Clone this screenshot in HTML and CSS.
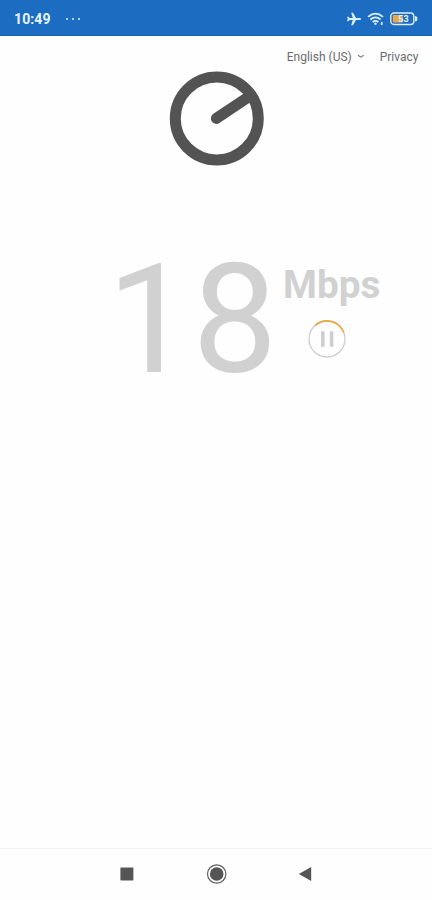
FILE: index.html
```html
<!DOCTYPE html>
<html lang="en">
<head>
<meta charset="utf-8">
<title>Speed test</title>
<link rel="stylesheet" href="styles.css">
</head>
<body>
<header class="status">
  <span class="time">10:49</span>
  <span class="dots"><i></i><i></i><i></i></span>
  <svg class="plane" width="16" height="16" viewBox="0 0 16 16"><path d="M15 8c0-.7-.6-1.1-1.3-1.1H10L7 1.8H5.2l1.6 5.1H3.6L2.5 5.8H1.1L1.8 8l-.7 2.2h1.4l1.1-1.1h3.2l-1.6 5.1H7L10 9.1h3.7C14.4 9.1 15 8.7 15 8z"/></svg>
  <svg class="wifi" width="18" height="14" viewBox="0 0 18 14"><path d="M1 4.8Q8.5-1.4 16 4.8M3.4 7.5Q8.5 3.4 13.6 7.5M5.7 10Q8.5 7.7 11.3 10"/><circle cx="8.5" cy="11.7" r="1.2"/><path d="M14.7 10v3"/></svg>
  <svg class="battery" width="28" height="14" viewBox="0 0 28 14"><rect class="case" x=".8" y="1" width="23" height="11.5" rx="3.2"/><path class="tip" d="M25 4q2.4 0 2.4 2.7T25 9.5z"/><rect class="charge" x="2.8" y="3" width="10" height="7.5" rx="1"/><text x="8.3" y="10.1">53</text></svg>
</header>
<main>
  <nav class="links">
    <span>English (US)</span>
    <svg width="8" height="5" viewBox="0 0 8 5"><path d="M1 1.2l2.8 1.9L6.6 1.2"/></svg>
    <span class="privacy">Privacy</span>
  </nav>
  <svg class="logo" width="96" height="96" viewBox="0 0 96 96"><circle cx="47.8" cy="48.4" r="41.5"/><path d="M47.4 48.4L82 25.2"/></svg>
  <section class="result">
    <div class="value">18</div>
    <div class="side">
      <div class="unit">Mbps</div>
      <svg class="pause" width="40" height="40" viewBox="0 0 40 40"><circle cx="20" cy="20" r="18"/><path class="arc" d="M8.2 6.4A18 18 0 0 1 36.8 13.5"/><path class="bars" d="M15.8 12.2v15.6M24.6 12.2v15.6"/></svg>
    </div>
  </section>
</main>
<footer class="navbar">
  <svg width="20" height="24" viewBox="0 0 20 24"><rect x="3.4" y="5.4" width="13" height="13" rx=".6"/></svg>
  <svg width="24" height="24" viewBox="0 0 24 24"><circle class="ring" cx="12.7" cy="12" r="9.2"/><circle cx="12.7" cy="12" r="6.8"/></svg>
  <svg width="20" height="24" viewBox="0 0 20 24"><path d="M3.8 12L16.2 5v14z"/></svg>
</footer>
</body>
</html>
```
FILE: styles.css
```css
* { box-sizing: border-box; }
body {
  margin: 0;
  height: 900px;
  display: flex;
  flex-direction: column;
  overflow: hidden;
  background: #fefefe;
  font-family: Roboto, sans-serif;
}
svg { display: block; flex: none; }
.status {
  height: 36px;
  flex: none;
  display: flex;
  align-items: center;
  padding: 3px 14px 0;
  background: #1c6dc1;
  border-bottom: 1px solid #1765b8;
  color: #e9f4ff;
}
.time { width: 51px; font-size: 14px; font-weight: 700; letter-spacing: .1px; }
.dots { display: flex; gap: 3.5px; margin-right: auto; padding-left: 1px; }
.dots i { width: 2.4px; height: 2.4px; border-radius: 50%; background: #e3f1ff; }
.plane { fill: #dcefff; margin-right: 5px; }
.wifi { fill: #dcefff; margin-right: 5px; }
.wifi path { fill: none; stroke: #dcefff; stroke-width: 1.7; }
.case { fill: none; stroke: #dcefff; stroke-width: 1.4; }
.tip { fill: #dcefff; }
.charge { fill: #e4a94b; }
.battery text { font-size: 9px; font-weight: 700; fill: #e4f2ff; }
main { flex: 1; display: flex; flex-direction: column; }
.links {
  height: 34px;
  flex: none;
  display: flex;
  align-items: center;
  justify-content: flex-end;
  padding: 7px 13.5px 0 0;
  font-size: 12px;
  color: #6c6c6c;
}
.links svg { margin-left: 5px; fill: none; stroke: #777; stroke-width: 1.1; }
.privacy { margin-left: 15px; }
.logo { margin: 0 0 0 169px; fill: none; stroke: #535353; stroke-width: 11; stroke-linecap: round; }
.result { display: flex; margin: 78px 0 0 107px; color: #d1d1d1; }
.value { width: 176px; font-size: 151.5px; line-height: 152px; height: 152px; }
.side { padding-top: 16px; }
.unit { font-size: 38.8px; line-height: 49px; font-weight: 700; }
.pause { margin: 10px 0 0 24px; fill: none; stroke: #cdcdcd; stroke-width: 1.3; }
.arc { stroke: #eda63c; stroke-width: 1.6; }
.bars { stroke-width: 3.6; }
.navbar {
  height: 52px;
  flex: none;
  display: flex;
  align-items: center;
  justify-content: space-between;
  padding: 0 117px 1px;
  border-top: 1px solid #f2f2f2;
  fill: #555;
}
.ring { fill: none; stroke: #606060; stroke-width: 1.2; }
```
